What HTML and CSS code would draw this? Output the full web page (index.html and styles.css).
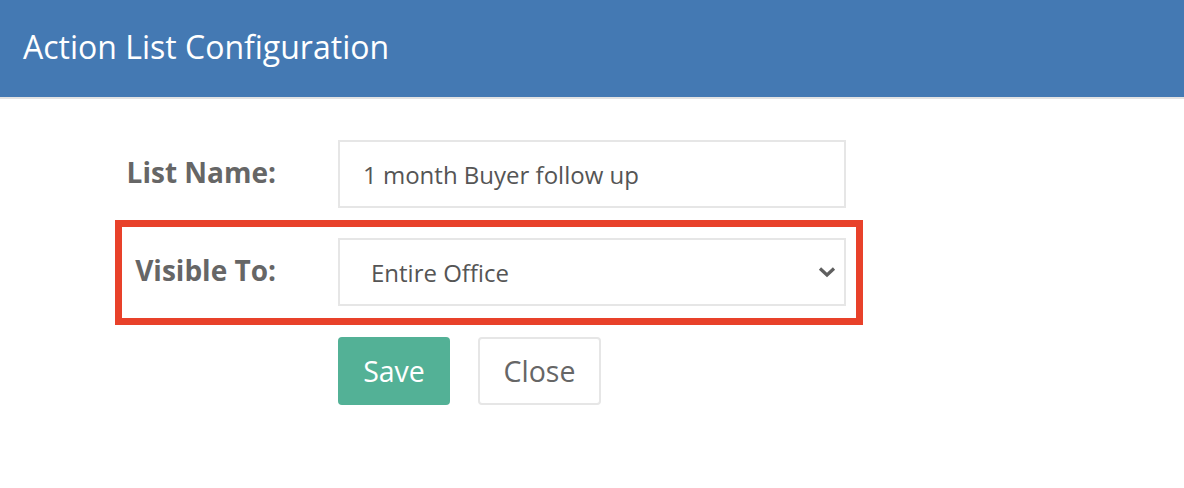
FILE: index.html
```html
<!DOCTYPE html>
<html>
<head>
<meta charset="utf-8">
<link rel="stylesheet" href="styles.css">
</head>
<body>
<header class="header"><h1 class="title">Action List Configuration</h1></header>
<main class="form">
  <div class="row">
    <label class="label">List Name:</label>
    <div class="field"><span class="field-text">1 month Buyer follow up</span></div>
  </div>
  <div class="row row-highlight">
    <label class="label">Visible To:</label>
    <div class="field field-select">
      <span class="field-text select-text">Entire Office</span>
      <svg class="chevron" width="18" height="12" viewBox="0 0 18 12"><path d="M2 2.5 L9 9 L16 2.5" fill="none" stroke="#5f5f5f" stroke-width="3.2"/></svg>
    </div>
  </div>
  <div class="actions">
    <button class="btn btn-save">Save</button>
    <button class="btn btn-close">Close</button>
  </div>
</main>
</body>
</html>
```
FILE: styles.css
```css
* { box-sizing: border-box; }
body { margin: 0; background: #fff; font-family: "Open Sans", "Liberation Sans", sans-serif; }
.header {
  height: 99px;
  background: #4479b3;
  border-bottom: 2px solid #e3e3e3;
  padding: 26px 0 0 23px;
}
.title { margin: 0; color: #fff; font-weight: 400; font-size: 32px; line-height: 42px; }
.form { padding: 41px 0 0 115px; }
.row {
  display: flex;
  align-items: center;
  width: 748px;
  border: 7px solid transparent;
  border-top: 0; border-bottom: 0;
  gap: 62px;
}
.row-highlight {
  margin-top: 12px;
  border: 7px solid #e8412a;
  padding: 11px 0 12px;
}
.label {
  width: 154px;
  text-align: right;
  font-weight: 700;
  font-size: 28px;
  font-stretch: 97%;
  color: #666;
  line-height: 36px;
  margin-top: -4px;
}
.field {
  width: 508px;
  height: 68px;
  border: 2px solid #e6e6e6;
  display: flex;
  align-items: center;
  padding-left: 23px;
}
.field-text { font-size: 24px; color: #555; }
.field-select { padding-left: 31px; padding-right: 8px; justify-content: space-between; }
.chevron { display: block; }
.actions { display: flex; gap: 28px; margin: 12px 0 0 223px; }
.btn {
  height: 68px;
  font-family: inherit;
  font-size: 28.5px;
  border-radius: 4px;
  padding: 0;
}
.btn-save { background: #53b196; color: #fff; border: 0; width: 112px; }
.btn-close { background: #fff; color: #666; border: 2px solid #e6e6e6; width: 123px; }
```
